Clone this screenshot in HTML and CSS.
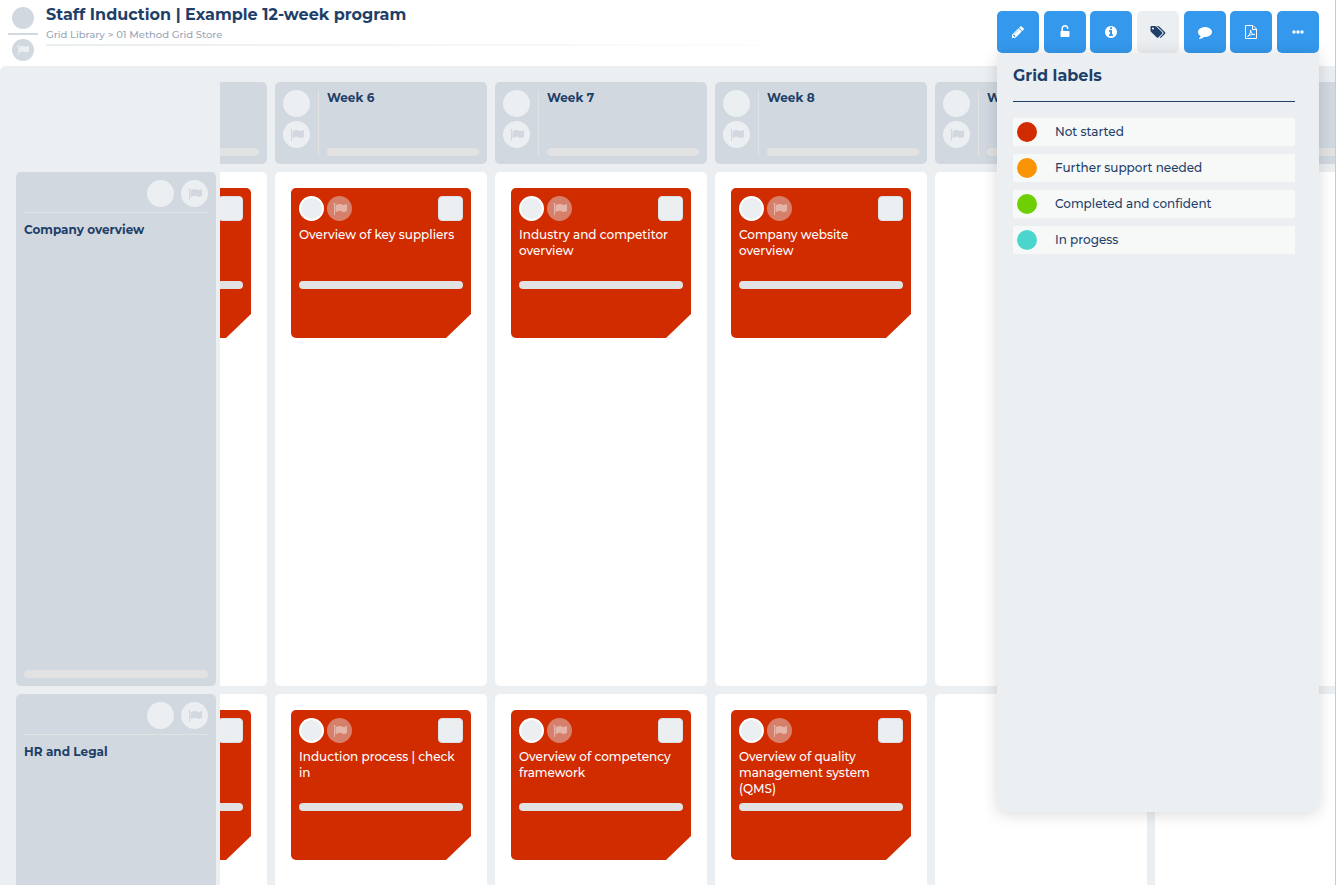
FILE: index.html
```
<!DOCTYPE html>
<html lang="en">
<head>
    <meta charset="UTF-8">
    <meta name="viewport" content="width=device-width, initial-scale=1.0">
    <title>Staff Induction</title>
    <link rel="stylesheet" href="styles.css">
</head>
<body>
    <svg class="sprite" aria-hidden="true">
        <symbol id="flag" viewBox="0 0 1792 1792"><path d="M320 256q0 72-64 110v1266q0 13-9.500 22.500t-22.500 9.500h-64q-13 0-22.500-9.500t-9.500-22.500v-1266q-64-38-64-110 0-53 37.500-90.500t90.500-37.500 90.500 37.500 37.500 90.500zm1472 64v763q0 25-12.500 38.500t-39.500 27.500q-215 116-369 116-61 0-123.500-22t-108.500-48-115.500-48-142.500-22q-192 0-464 146-17 9-33 9-26 0-45-19t-19-45v-742q0-32 31-55 21-14 79-43 236-120 421-120 107 0 200 29t219 88q38 19 88 19 54 0 117.500-21t110-47 88-47 54.500-21q26 0 45 19t19 45z"/></symbol>
        <symbol id="pencil" viewBox="0 0 1792 1792"><path d="M491 1536l91-91-235-235-91 91v107h128v128h107zm523-928q0-22-22-22-10 0-17 7l-542 542q-7 7-7 17 0 22 22 22 10 0 17-7l542-542q7-7 7-17zm-54-192l416 416-832 832h-416v-416zm683 96q0 53-37 90l-166 166-416-416 166-165q36-38 90-38 53 0 91 38l235 234q37 39 37 91z"/></symbol>
        <symbol id="unlock" viewBox="0 0 1792 1792"><path d="M1376 768q40 0 68 28t28 68v576q0 40-28 68t-68 28h-960q-40 0-68-28t-28-68v-576q0-40 28-68t68-28h32v-320q0-185 131.500-316.500t316.500-131.500 316.500 131.500 131.500 316.500q0 26-19 45t-45 19h-64q-26 0-45-19t-19-45q0-106-75-181t-181-75-181 75-75 181v320h736z"/></symbol>
        <symbol id="info" viewBox="0 0 1792 1792"><path d="M1152 1376v-160q0-14-9-23t-23-9h-96v-512q0-14-9-23t-23-9h-320q-14 0-23 9t-9 23v160q0 14 9 23t23 9h96v320h-96q-14 0-23 9t-9 23v160q0 14 9 23t23 9h448q14 0 23-9t9-23zm-128-896v-160q0-14-9-23t-23-9h-192q-14 0-23 9t-9 23v160q0 14 9 23t23 9h192q14 0 23-9t9-23zm640 416q0 209-103 385.500t-279.500 279.500-385.500 103-385.500-103-279.500-279.500-103-385.500 103-385.500 279.500-279.500 385.500-103 385.500 103 279.500 279.500 103 385.500z"/></symbol>
        <symbol id="tags" viewBox="0 0 1920 1792"><path d="M448 448q0-53-37.500-90.500t-90.500-37.500-90.500 37.500-37.500 90.500 37.500 90.500 90.500 37.500 90.500-37.500 37.500-90.500zm1067 576q0 53-37 90l-491 492q-39 37-91 37-53 0-90-37l-715-716q-38-37-64.500-101t-26.500-117v-416q0-52 38-90t90-38h416q53 0 117 26.500t102 64.500l715 714q37 39 37 91zm384 0q0 53-37 90l-491 492q-39 37-91 37-36 0-59-14t-53-45l470-470q37-37 37-90 0-52-37-91l-715-714q-38-38-102-64.500t-117-26.500h224q53 0 117 26.500t102 64.500l715 714q37 39 37 91z"/></symbol>
        <symbol id="comment" viewBox="0 0 1792 1792"><path d="M1792 896q0 174-120 321.500t-326 233-450 85.500q-70 0-145-8-198 175-460 242-49 14-114 22-17 2-30.500-9t-17.500-29v-1q-3-4-.5-12t2-10 4.500-9.500l6-9 7-8.500 8-9q7-8 31-34.500t34.500-38 31-39.500 32.500-51 27-59 26-76q-157-89-247.500-220t-90.500-281q0-130 71-248.500t191-204.500 286-136.500 348-50.500q244 0 450 85.500t326 233 120 321.500z"/></symbol>
        <symbol id="pdf" viewBox="0 0 14 14"><path d="M1.500 .5h7.500l3.500 3.500v9.500h-11zM8.500 .5v4h4M3.500 11.500c1.800-1 3.200-3.600 3.200-6.500 0 3 1.600 4.600 4.100 4.600-2.700-.4-4.700 0-7.300 1.900z" fill="none" stroke="currentColor"/></symbol>
        <symbol id="dots" viewBox="0 0 14 14"><circle cx="3" cy="7" r="1.700"/><circle cx="7" cy="7" r="1.700"/><circle cx="11" cy="7" r="1.700"/></symbol>
    </svg>

    <header class="header">
        <div class="status">
            <span class="dot"></span>
            <span class="status-line"></span>
            <span class="dot"><svg class="icon"><use href="#flag"/></svg></span>
        </div>
        <div class="heading">
            <h1>Staff Induction | Example 12-week program</h1>
            <nav class="breadcrumb"><a href="#">Grid Library</a> <span>&gt;</span> <a href="#">01 Method Grid Store</a></nav>
        </div>
    </header>

    <main class="board">
        <div class="rows">
            <div></div>
            <section class="row-head">
                <div class="row-icons">
                    <span class="dot"></span>
                    <span class="dot"><svg class="icon"><use href="#flag"/></svg></span>
                </div>
                <h2>Company overview</h2>
                <div class="bar"></div>
            </section>
            <section class="row-head">
                <div class="row-icons">
                    <span class="dot"></span>
                    <span class="dot"><svg class="icon"><use href="#flag"/></svg></span>
                </div>
                <h2>HR and Legal</h2>
                <div class="bar"></div>
            </section>
        </div>

        <div class="viewport">
            <div class="columns">
                <div class="col-head">
                    <div class="col-icons"></div>
                    <div class="col-body"><div class="bar"></div></div>
                </div>
                <div class="col-head">
                    <div class="col-icons"><span class="dot"></span><span class="dot"><svg class="icon"><use href="#flag"/></svg></span></div>
                    <div class="col-body"><h2>Week 6</h2><div class="bar"></div></div>
                </div>
                <div class="col-head">
                    <div class="col-icons"><span class="dot"></span><span class="dot"><svg class="icon"><use href="#flag"/></svg></span></div>
                    <div class="col-body"><h2>Week 7</h2><div class="bar"></div></div>
                </div>
                <div class="col-head">
                    <div class="col-icons"><span class="dot"></span><span class="dot"><svg class="icon"><use href="#flag"/></svg></span></div>
                    <div class="col-body"><h2>Week 8</h2><div class="bar"></div></div>
                </div>
                <div class="col-head">
                    <div class="col-icons"><span class="dot"></span><span class="dot"><svg class="icon"><use href="#flag"/></svg></span></div>
                    <div class="col-body"><h2>Week 9</h2><div class="bar"></div></div>
                </div>
                <div class="col-head">
                    <div class="col-icons"></div>
                    <div class="col-body"><div class="bar"></div></div>
                </div>

                <div class="cell">
                    <article class="card">
                        <div class="card-top"><input type="checkbox" aria-label="Done"></div>
                        <h3></h3>
                        <div class="bar"></div>
                    </article>
                </div>
                <div class="cell">
                    <article class="card">
                        <div class="card-top"><span class="dot"></span><span class="dot faded"><svg class="icon"><use href="#flag"/></svg></span><input type="checkbox" aria-labelledby="card-1"></div>
                        <h3 id="card-1">Overview of key suppliers</h3>
                        <div class="bar"></div>
                    </article>
                </div>
                <div class="cell">
                    <article class="card">
                        <div class="card-top"><span class="dot"></span><span class="dot faded"><svg class="icon"><use href="#flag"/></svg></span><input type="checkbox" aria-labelledby="card-2"></div>
                        <h3 id="card-2">Industry and competitor overview</h3>
                        <div class="bar"></div>
                    </article>
                </div>
                <div class="cell">
                    <article class="card">
                        <div class="card-top"><span class="dot"></span><span class="dot faded"><svg class="icon"><use href="#flag"/></svg></span><input type="checkbox" aria-labelledby="card-3"></div>
                        <h3 id="card-3">Company website overview</h3>
                        <div class="bar"></div>
                    </article>
                </div>
                <div class="cell"></div>
                <div class="cell"></div>

                <div class="cell">
                    <article class="card">
                        <div class="card-top"><input type="checkbox" aria-label="Done"></div>
                        <h3></h3>
                        <div class="bar"></div>
                    </article>
                </div>
                <div class="cell">
                    <article class="card">
                        <div class="card-top"><span class="dot"></span><span class="dot faded"><svg class="icon"><use href="#flag"/></svg></span><input type="checkbox" aria-labelledby="card-4"></div>
                        <h3 id="card-4">Induction process | check in</h3>
                        <div class="bar"></div>
                    </article>
                </div>
                <div class="cell">
                    <article class="card">
                        <div class="card-top"><span class="dot"></span><span class="dot faded"><svg class="icon"><use href="#flag"/></svg></span><input type="checkbox" aria-labelledby="card-5"></div>
                        <h3 id="card-5">Overview of competency framework</h3>
                        <div class="bar"></div>
                    </article>
                </div>
                <div class="cell">
                    <article class="card">
                        <div class="card-top"><span class="dot"></span><span class="dot faded"><svg class="icon"><use href="#flag"/></svg></span><input type="checkbox" aria-labelledby="card-6"></div>
                        <h3 id="card-6">Overview of quality management system (QMS)</h3>
                        <div class="bar"></div>
                    </article>
                </div>
                <div class="cell"></div>
                <div class="cell"></div>
            </div>
        </div>
    </main>

    <div class="tools">
        <div class="toolbar">
            <button type="button" aria-label="Edit"><svg class="icon"><use href="#pencil"/></svg></button>
            <button type="button" aria-label="Unlock"><svg class="icon"><use href="#unlock"/></svg></button>
            <button type="button" aria-label="Info"><svg class="icon"><use href="#info"/></svg></button>
            <button type="button" class="active" aria-label="Labels"><svg class="icon"><use href="#tags"/></svg></button>
            <button type="button" aria-label="Comments"><svg class="icon"><use href="#comment"/></svg></button>
            <button type="button" aria-label="Export PDF"><svg class="icon"><use href="#pdf"/></svg></button>
            <button type="button" aria-label="More"><svg class="icon"><use href="#dots"/></svg></button>
        </div>
        <aside class="panel">
            <h2>Grid labels</h2>
            <ul class="labels">
                <li><span class="swatch red"></span>Not started</li>
                <li><span class="swatch orange"></span>Further support needed</li>
                <li><span class="swatch green"></span>Completed and confident</li>
                <li><span class="swatch teal"></span>In progess</li>
            </ul>
        </aside>
    </div>
</body>
</html>
```
FILE: styles.css
```
* {
    box-sizing: border-box;
}

body {
    display: flex;
    flex-direction: column;
    position: relative;
    height: 100vh;
    margin: 0;
    overflow: hidden;
    background-color: #fff;
    border-right: 1px solid #c6cad2;
    color: #1f3f68;
    font-family: Montserrat, Inter, sans-serif;
    font-size: 12px;
    font-weight: 500;
    line-height: 16px;
}

h1, h2, h3, ul {
    margin: 0;
    padding: 0;
}

h2 {
    font-size: 12px;
    font-weight: 700;
}

.sprite {
    position: absolute;
    width: 0;
    height: 0;
}

.icon {
    width: 14px;
    height: 14px;
    fill: currentColor;
}

.dot {
    display: flex;
    justify-content: center;
    align-items: center;
    width: 27px;
    height: 27px;
    border-radius: 50%;
    background-color: #ebeff2;
    color: #d1d8e0;
}

.bar {
    height: 8px;
    border-radius: 4px;
    background-color: #e2e2e2;
}

/* header */
.header {
    display: flex;
    gap: 8px;
    height: 66px;
    padding: 7px 8px 0;
    flex-shrink: 0;
}

.status {
    display: flex;
    flex-direction: column;
    align-items: center;
    gap: 4px;
    width: 30px;
}

.status .dot {
    width: 22px;
    height: 22px;
    background-color: #d1d8e0;
    color: #ebeff2;
}

.status .icon {
    width: 12px;
    height: 12px;
}

.status-line {
    width: 100%;
    height: 2px;
    background-color: #d1d8e0;
}

.heading {
    width: 60%;
}

h1 {
    font-size: 16px;
    line-height: 16px;
}

.breadcrumb {
    margin-top: 4px;
    padding-bottom: 1px;
    font-size: 10px;
    color: #98a6b9;
}

.breadcrumb::after {
    content: "";
    display: block;
    height: 2px;
    margin-top: 1px;
    background: linear-gradient(to right, #e8edef, #fff);
}

.breadcrumb a {
    color: inherit;
    text-decoration: none;
}

/* board */
.board {
    display: flex;
    flex: 1;
    min-height: 0;
    padding-top: 16px;
    overflow: hidden;
    background-color: #ebeff2;
    border-top-left-radius: 6px;
}

.rows,
.columns {
    display: grid;
    grid-template-rows: 82px 514px 514px;
    gap: 8px;
}

.rows {
    flex: 0 0 220px;
    padding: 0 4px 0 16px;
}

.viewport {
    flex: 1;
    overflow: hidden;
}

/* board is scrolled along to week 6 */
.columns {
    grid-template-columns: repeat(6, 212px);
    margin-left: -165px;
}

.row-head,
.col-head {
    display: flex;
    padding: 8px;
    border-radius: 5px;
    background-color: #d1d8e0;
}

.row-head {
    flex-direction: column;
}

.row-icons {
    display: flex;
    justify-content: flex-end;
    gap: 7px;
    padding-bottom: 5px;
    border-bottom: 1px solid #e2e2e2;
}

.row-head h2 {
    margin-top: 9px;
}

.row-head .bar,
.col-body .bar {
    margin-top: auto;
}

.col-icons {
    display: flex;
    flex-direction: column;
    gap: 4px;
    width: 36px;
    border-right: 1px solid #e2e2e2;
}

.col-body {
    display: flex;
    flex-direction: column;
    flex: 1;
    margin-left: 8px;
}

.cell {
    padding: 16px;
    border-radius: 5px;
    background-color: #fff;
}

.card {
    height: 150px;
    padding: 8px;
    border-radius: 5px;
    background-color: #d12b00;
    color: #fff;
    clip-path: polygon(0 0, 100% 0, 100% 126px, 155px 100%, 0 100%);
}

.card-top {
    display: flex;
    gap: 3px;
}

.card .dot {
    width: 25px;
    height: 25px;
    border: 2px solid #fff;
}

.card .faded {
    border: none;
    background-color: #d6806c;
    color: #e6b5aa;
}

.card input {
    appearance: none;
    width: 25px;
    height: 25px;
    margin: 0 0 0 auto;
    border: 1px solid #dbe0e5;
    border-radius: 4px;
    background-color: #ebeff2;
}

.card h3 {
    height: 48px;
    margin: 6px 0;
    font-size: 12px;
    font-weight: 500;
}

/* tools */
.tools {
    position: absolute;
    top: 11px;
    right: 16px;
    width: 322px;
}

.toolbar {
    display: flex;
    justify-content: space-between;
}

.toolbar button {
    display: flex;
    justify-content: center;
    align-items: center;
    width: 42px;
    height: 42px;
    padding: 0;
    border: none;
    border-radius: 5px;
    background-color: #3498ec;
    color: #fff;
    cursor: pointer;
}

.toolbar .active {
    background-color: #ebeff2;
    color: #1f3f68;
}

.active .icon {
    width: 16px;
}

/* relative so that its shadow falls on the buttons */
.panel {
    position: relative;
    height: calc(100vh - 126px);
    padding: 15px 24px 16px 16px;
    border-radius: 0 0 8px 8px;
    background-color: #ebeff2;
    box-shadow: 0 2px 16px rgba(0, 0, 0, 0.15);
}

.panel h2 {
    padding-bottom: 17px;
    border-bottom: 1px solid #1f3f68;
    font-size: 16px;
}

.labels {
    display: flex;
    flex-direction: column;
    gap: 8px;
    margin-top: 16px;
    list-style: none;
}

.labels li {
    display: flex;
    align-items: center;
    gap: 18px;
    height: 28px;
    padding: 0 4px;
    background-color: #f7f9f9;
}

.swatch {
    width: 20px;
    height: 20px;
    border-radius: 50%;
}

.red {
    background-color: #d12b00;
}

.orange {
    background-color: #fa9405;
}

.green {
    background-color: #6fcf05;
}

.teal {
    background-color: #4ad6cd;
}
```
